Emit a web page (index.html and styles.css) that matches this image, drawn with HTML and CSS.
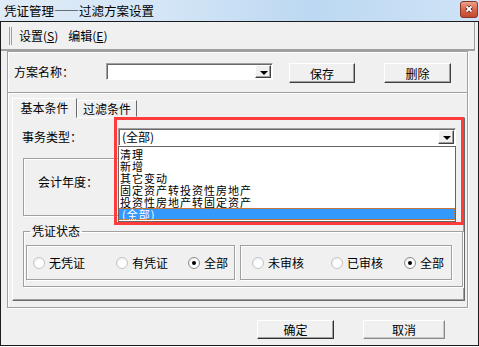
FILE: index.html
```html
<!DOCTYPE html>
<html lang="zh-CN">
<head>
    <meta charset="UTF-8">
    <title>凭证管理——过滤方案设置</title>
    <link rel="stylesheet" href="styles.css">
</head>
<body>
    <div class="titlebar">
        <span class="title">凭证管理——过滤方案设置</span>
        <span class="close">
            <svg width="18" height="17" viewBox="0 0 18 17">
                <defs>
                    <linearGradient id="cg" x1="0" y1="0" x2="0" y2="1">
                        <stop offset="0" stop-color="#eba48f"/>
                        <stop offset=".5" stop-color="#d9664c"/>
                        <stop offset="1" stop-color="#c3452d"/>
                    </linearGradient>
                </defs>
                <rect x=".5" y=".5" width="17" height="16" rx="2.5" fill="url(#cg)" stroke="#8a3626"/>
                <path d="M6.5 5.5l5 5M11.5 5.5l-5 5" stroke="#4a1c14" stroke-width="3.4"/>
                <path d="M6.5 5.5l5 5M11.5 5.5l-5 5" stroke="#fff" stroke-width="1.8"/>
            </svg>
        </span>
    </div>

    <div class="frame">
        <div class="menubar">
            <span class="grip"></span>
            <span class="menu">设置(<u>S</u>)</span>
            <span class="menu">编辑(<u>E</u>)</span>
        </div>

        <div class="panel">
            <div class="name-row">
                <label class="name-label">方案名称：</label>
                <div class="combo combo-name"><span class="drop"></span></div>
                <button class="btn btn-save">保存</button>
                <button class="btn btn-del">删除</button>
            </div>
            <div class="sep"></div>

            <div class="tabs">
                <span class="tab active">基本条件</span>
                <span class="tab">过滤条件</span>
            </div>
            <div class="tabpanel">
                <div class="type-row">
                    <label class="type-label">事务类型：</label>
                    <div class="combo combo-type">
                        <span class="combo-text">(全部)</span>
                        <span class="drop"></span>
                        <ul class="dropdown">
                            <li>清理</li>
                            <li>新增</li>
                            <li>其它变动</li>
                            <li>固定资产转投资性房地产</li>
                            <li>投资性房地产转固定资产</li>
                            <li class="selected">(全部)</li>
                        </ul>
                    </div>
                </div>

                <div class="year-box">会计年度：</div>

                <fieldset class="status">
                    <legend>凭证状态</legend>
                    <div class="radio-boxes">
                        <div class="radio-box left">
                            <label class="radio w83"><span class="dot"></span>无凭证</label>
                            <label class="radio w72"><span class="dot"></span>有凭证</label>
                            <label class="radio"><span class="dot on"></span>全部</label>
                        </div>
                        <div class="radio-box right">
                            <label class="radio w79"><span class="dot"></span>未审核</label>
                            <label class="radio w73"><span class="dot"></span>已审核</label>
                            <label class="radio"><span class="dot on"></span>全部</label>
                        </div>
                    </div>
                </fieldset>

                <div class="highlight"></div>
            </div>
        </div>

        <div class="footer">
            <button class="btn btn-ok">确定</button>
            <button class="btn btn-cancel">取消</button>
        </div>
    </div>
</body>
</html>
```

FILE: styles.css
```css
* {
    box-sizing: border-box;
}
body {
    margin: 0;
    width: 479px;
    height: 347px;
    overflow: hidden;
    background: #fff;
    font-family: "Noto Sans CJK SC", "DejaVu Sans", sans-serif;
    font-size: 12px;
    color: #000;
}
.titlebar {
    height: 21px;
    display: flex;
    align-items: center;
    padding: 0 1px 0 4px;
    background: linear-gradient(to right, #dfebf7 0%, #d3e5f6 35%, #bcd8f2 65%, #cfe3f6 100%);
}
.title {
    font-size: 12.5px;
    line-height: 16px;
}
.close {
    margin-left: auto;
    align-self: flex-start;
    margin-top: 1px;
    height: 17px;
}
.close svg {
    display: block;
}
.frame {
    width: 479px;
    height: 325px;
    border: 1px solid #1c1c1c;
    background: #f0f0f0;
    display: flex;
    flex-direction: column;
}
.menubar {
    height: 29px;
    margin-right: 3px;
    border-bottom: 2px solid #a0a0a0;
    border-right: 1px solid #a0a0a0;
    display: flex;
    align-items: center;
    padding-left: 8px;
}
.grip {
    width: 3px;
    height: 18px;
    border-left: 1px solid #a0a0a0;
    border-right: 1px solid #a0a0a0;
    margin-right: 7px;
}
.menu {
    margin-right: 10px;
    line-height: 16px;
}
.menu u {
    text-decoration-thickness: 1px;
    text-underline-offset: 1px;
}
.panel {
    margin-left: 6px;
    width: 461px;
    height: 257px;
    border: 1px solid #a0a0a0;
    box-shadow: 1px 1px 0 #fff, inset 1px 1px 0 #fff;
}
.name-row {
    margin-top: 11px;
    padding-left: 6px;
    height: 20px;
    display: flex;
    align-items: flex-start;
}
.name-label {
    width: 92px;
    line-height: 18px;
}
.combo {
    position: relative;
    background: #fff;
    border: 1px solid;
    border-color: #a0a0a0 #fff #fff #a0a0a0;
    box-shadow: inset 1px 1px 0 #696969;
}
.combo-name {
    width: 167px;
    height: 17px;
}
.combo-type {
    width: 338px;
    height: 18px;
}
.combo-text {
    display: block;
    padding-left: 3px;
    line-height: 16px;
}
.drop {
    position: absolute;
    right: 1px;
    top: 1px;
    bottom: 1px;
    width: 16px;
    background: #f0f0f0;
    border: 1px solid;
    border-color: #fff #404040 #404040 #fff;
    box-shadow: inset -1px -1px 0 #a0a0a0;
}
.drop::after {
    content: "";
    position: absolute;
    left: 4px;
    top: 5px;
    border-left: 4px solid transparent;
    border-right: 4px solid transparent;
    border-top: 4px solid #000;
}
.btn {
    font-family: inherit;
    font-size: 12px;
    padding: 0;
    background: #f0f0f0;
    border: 1px solid;
    border-color: #fff #404040 #404040 #fff;
    box-shadow: inset -1px -1px 0 #a0a0a0;
    color: #000;
}
.btn-save {
    margin-left: 16px;
    width: 66px;
    height: 20px;
}
.btn-del {
    margin-left: 29px;
    width: 67px;
    height: 20px;
}
.sep {
    margin-top: 9px;
    height: 2px;
    border-top: 1px solid #a0a0a0;
    border-bottom: 1px solid #fff;
}
.tabs {
    margin-top: 4px;
    padding-left: 4px;
    height: 19px;
    display: flex;
    align-items: flex-end;
}
.tab {
    width: 60px;
    height: 17px;
    text-align: center;
    line-height: 15px;
    border: 1px solid;
    border-color: #fff #696969 transparent #fff;
}
.tab.active {
    width: 65px;
    height: 20px;
    margin-bottom: -1px;
    line-height: 17px;
    background: #f0f0f0;
    position: relative;
    z-index: 1;
}
.tabpanel {
    position: relative;
    margin-left: 4px;
    width: 453px;
    height: 184px;
    border: 1px solid;
    border-color: #fff #696969 #696969 #fff;
    box-shadow: inset -1px -1px 0 #a0a0a0;
}
.type-row {
    margin-top: 10px;
    padding-left: 9px;
    height: 18px;
    display: flex;
}
.type-label {
    width: 96px;
    line-height: 18px;
}
.dropdown {
    position: absolute;
    z-index: 2;
    left: -1px;
    top: 17px;
    width: 338px;
    height: 76px;
    margin: 0;
    padding: 1px 0 0;
    list-style: none;
    background: #fff;
    border: 1px solid #646464;
}
.dropdown li {
    height: 12px;
    font-size: 11px;
    letter-spacing: 1px;
    line-height: 12px;
    padding-left: 1px;
    white-space: nowrap;
}
.dropdown li.selected {
    background: #3399ff;
    color: #fff;
    outline: 1px dotted #c0763b;
    outline-offset: -1px;
    padding-left: 3px;
}
.year-box {
    margin: 12px 0 0 10px;
    width: 432px;
    height: 58px;
    padding: 15px 0 0 14px;
    line-height: 16px;
    border: 1px solid #a0a0a0;
    box-shadow: inset 1px 1px 0 #fff, 1px 1px 0 #fff;
}
.status {
    margin: 8px 0 0 10px;
    width: 440px;
    padding: 7px 0 6px 2px;
    border: 1px solid #a0a0a0;
    box-shadow: inset 1px 1px 0 #fff, 1px 1px 0 #fff;
}
.status legend {
    margin-left: 4px;
    padding: 0 2px;
    line-height: 14px;
}
.radio-boxes {
    display: flex;
    gap: 5px;
}
.radio-box {
    height: 35px;
    display: flex;
    align-items: center;
    border: 1px solid #a0a0a0;
    box-shadow: inset 1px 1px 0 #fff, 1px 1px 0 #fff;
}
.radio-box.left {
    width: 209px;
    padding-left: 6px;
}
.radio-box.right {
    width: 212px;
    padding-left: 11px;
}
.radio {
    display: flex;
    align-items: center;
    line-height: 14px;
}
.w83 { width: 83px; }
.w72 { width: 72px; }
.w79 { width: 79px; }
.w73 { width: 73px; }
.dot {
    position: relative;
    width: 12px;
    height: 12px;
    margin-right: 4px;
    border-radius: 50%;
    border: 1px solid #c4c4c4;
    background: radial-gradient(circle at 60% 60%, #fff 40%, #e4e4e4 100%);
}
.dot.on {
    border-color: #8e8e8e;
}
.dot.on::after {
    content: "";
    position: absolute;
    left: 3px;
    top: 3px;
    width: 4px;
    height: 4px;
    border-radius: 50%;
    background: #000;
}
.highlight {
    position: absolute;
    z-index: 3;
    left: 101px;
    top: -1px;
    width: 350px;
    height: 108px;
    border: 3px solid #ff3b3b;
}
.footer {
    margin-top: 12px;
    padding-left: 256px;
    display: flex;
}
.btn-ok {
    width: 77px;
    height: 19px;
    border-color: #fff #303030 #303030 #fff;
}
.btn-cancel {
    margin-left: 29px;
    width: 82px;
    height: 19px;
    border-color: #fff #8a8a8a #8a8a8a #fff;
    box-shadow: inset -1px -1px 0 #c8c8c8;
}
```
